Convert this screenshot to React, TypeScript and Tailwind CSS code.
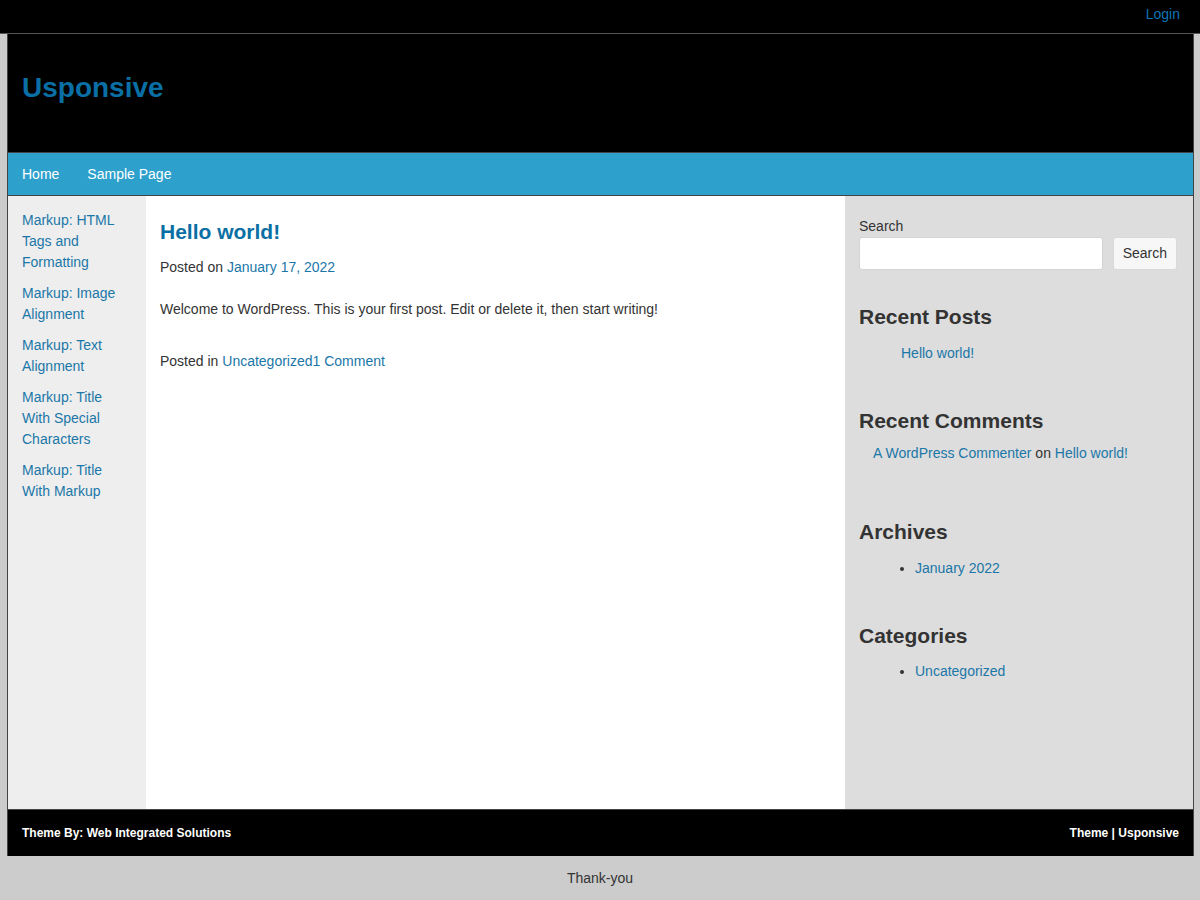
export default function App() {
  const pages = [
    "Markup: HTML Tags and Formatting",
    "Markup: Image Alignment",
    "Markup: Text Alignment",
    "Markup: Title With Special Characters",
    "Markup: Title With Markup",
  ];

  return (
    <div className="min-h-screen bg-[#cccccc] text-[14px] leading-[21px] text-[#333] font-['Liberation_Sans',Arial,sans-serif]">
      {/* Top bar */}
      <div className="h-[34px] bg-black border-b border-[#555] flex items-center justify-end pr-[20px] pb-[4px]">
        <a href="#" className="text-[#0d74b8]">Login</a>
      </div>

      <div className="ml-[7px] mr-[6px] border-x border-[#444]">
        {/* Header */}
        <header className="h-[119px] bg-black border-b border-[#444] flex items-center px-[14px] pb-[12px]">
          <h1 className="text-[28px] font-bold text-[#0a6fa4]">Usponsive</h1>
        </header>

        {/* Nav */}
        <nav className="h-[43px] bg-[#2ea0cc] border-b border-[#444] flex items-center px-[14px] gap-[28px] text-white">
          <a href="#">Home</a>
          <a href="#">Sample Page</a>
        </nav>

        {/* Content */}
        <div className="flex h-[613px]">
          <aside className="w-[138px] bg-[#eeeeee] px-[14px] pt-[14px]">
            {pages.map((p) => (
              <a key={p} href="#" className="block mb-[10px] text-[#1b77a8]">{p}</a>
            ))}
          </aside>

          <main className="w-[699px] bg-white px-[14px] pt-[23px]">
            <h2 className="text-[21px] leading-[26px] font-bold text-[#0a6fa4]">Hello world!</h2>
            <p className="mt-[12px]">
              Posted on <a href="#" className="text-[#1b77a8]">January 17, 2022</a>
            </p>
            <p className="mt-[21px]">Welcome to WordPress. This is your first post. Edit or delete it, then start writing!</p>
            <p className="mt-[31px]">
              Posted in <a href="#" className="text-[#1b77a8]">Uncategorized</a>
              <a href="#" className="text-[#1b77a8]">1 Comment</a>
            </p>
          </main>

          <aside className="flex-1 bg-[#dddddd] pl-[14px] pr-[16px] pt-[20px]">
            <label className="block">Search</label>
            <div className="flex gap-[10px]">
              <input className="flex-1 h-[33px] bg-white border border-[#d4d4d4] rounded-[3px]" />
              <button className="h-[33px] px-[9px] bg-[#f7f7f7] border border-[#d9d9d9] rounded-[3px] text-[#333]">Search</button>
            </div>

            <h3 className="mt-[34px] text-[21px] leading-[26px] font-bold">Recent Posts</h3>
            <ul className="mt-[13px] pl-[42px]">
              <li><a href="#" className="text-[#1b77a8]">Hello world!</a></li>
            </ul>

            <h3 className="mt-[44px] text-[21px] leading-[26px] font-bold">Recent Comments</h3>
            <ul className="mt-[9px] pl-[14px]">
              <li>
                <a href="#" className="text-[#1b77a8]">A WordPress Commenter</a> on{" "}
                <a href="#" className="text-[#1b77a8]">Hello world!</a>
              </li>
            </ul>

            <h3 className="mt-[55px] text-[21px] leading-[26px] font-bold">Archives</h3>
            <ul className="mt-[13px] pl-[56px] list-disc">
              <li><a href="#" className="text-[#1b77a8]">January 2022</a></li>
            </ul>

            <h3 className="mt-[44px] text-[21px] leading-[26px] font-bold">Categories</h3>
            <ul className="mt-[12px] pl-[56px] list-disc">
              <li><a href="#" className="text-[#1b77a8]">Uncategorized</a></li>
            </ul>
          </aside>
        </div>

        {/* Footer */}
        <footer className="h-[47px] bg-black border-t border-[#444] flex items-center justify-between px-[14px] text-white text-[12px] font-bold">
          <span>Theme By: Web Integrated Solutions</span>
          <span>Theme | Usponsive</span>
        </footer>
      </div>

      <div className="text-center pt-[12px] pb-[10px]">Thank-you</div>
    </div>
  );
}
